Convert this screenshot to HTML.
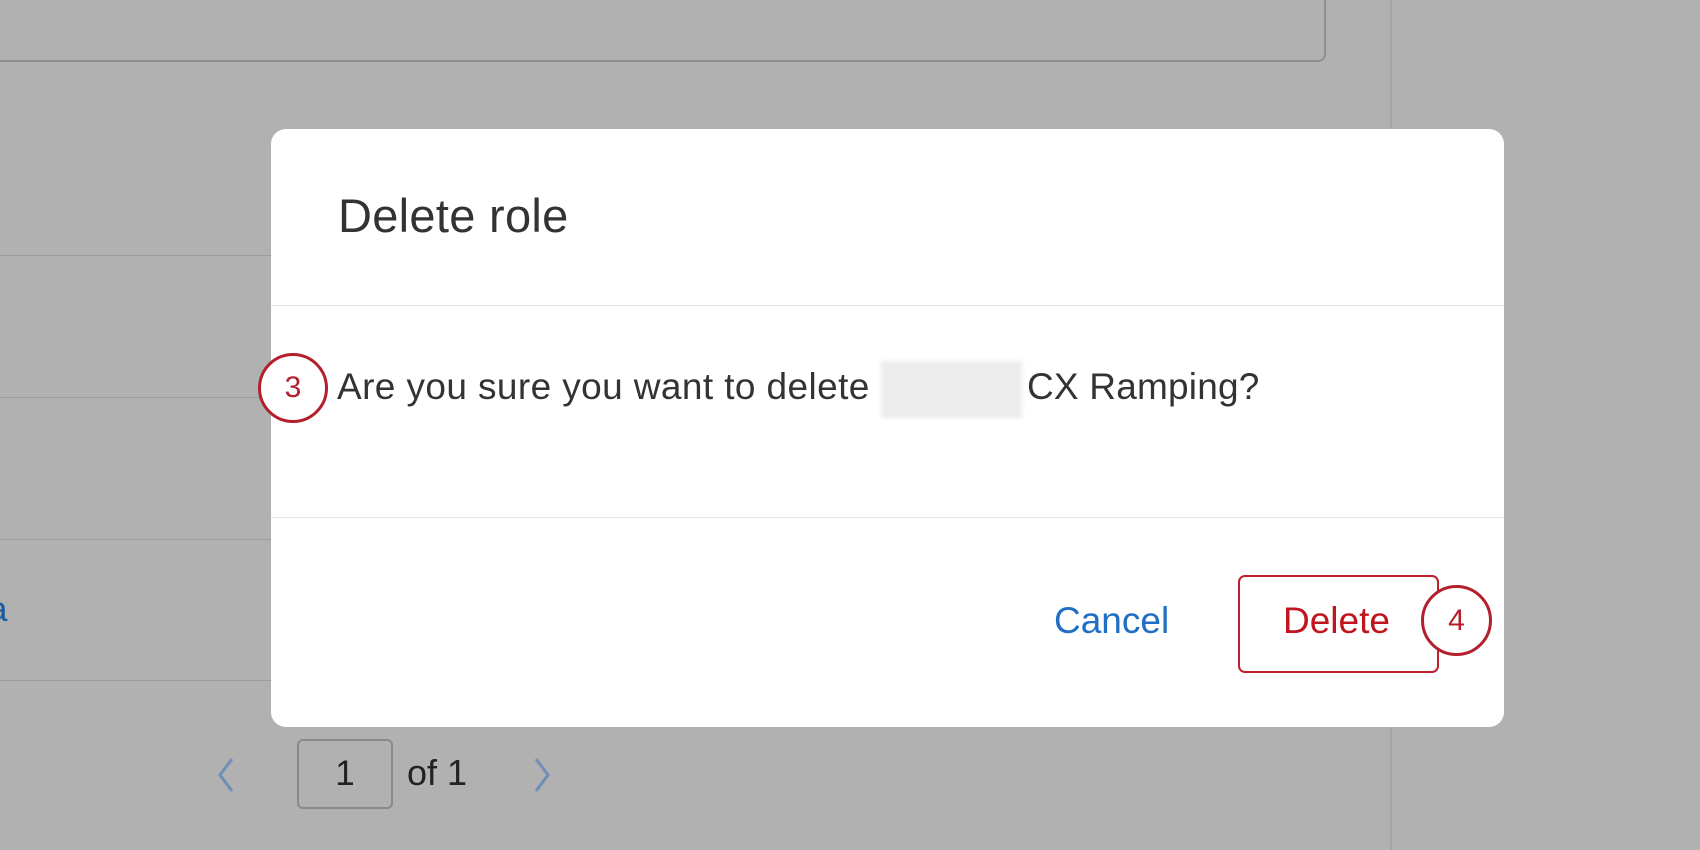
<!DOCTYPE html>
<html><head><style>
html,body{margin:0;padding:0;width:1700px;height:850px;overflow:hidden;background:#b1b1b1;font-family:"Liberation Sans",sans-serif;}
.a{position:absolute;}
</style></head><body>
<div class="a" style="left:-10px;top:-10px;width:1332px;height:68px;border:2px solid #8e8e8e;border-radius:8px;"></div>
<div class="a" style="left:1390px;top:0;width:2px;height:850px;background:#a6a6a6;"></div>
<div class="a" style="left:0;top:255px;width:280px;height:1px;background:#9c9c9c;"></div>
<div class="a" style="left:0;top:397px;width:280px;height:1px;background:#9c9c9c;"></div>
<div class="a" style="left:0;top:539px;width:280px;height:1px;background:#9c9c9c;"></div>
<div class="a" style="left:0;top:680px;width:280px;height:1px;background:#9c9c9c;"></div>
<div class="a" style="left:-12px;top:590px;font-size:35px;color:#1a5aa0;">a</div>
<svg class="a" style="left:210px;top:755px" width="30" height="40"><path d="M22 4 L10 20 L22 36" stroke="#6f8fb8" stroke-width="3" fill="none"/></svg>
<div class="a" style="left:297px;top:739px;width:96px;height:70px;border:2px solid #8a8a8a;border-radius:6px;box-sizing:border-box;text-align:center;line-height:66px;font-size:35px;color:#222;">1</div>
<div class="a" style="left:407px;top:752px;font-size:36px;color:#222;">of 1</div>
<svg class="a" style="left:528px;top:755px" width="30" height="40"><path d="M8 4 L20 20 L8 36" stroke="#6f8fb8" stroke-width="3" fill="none"/></svg>

<div class="a" style="left:271px;top:129px;width:1233px;height:598px;background:#fff;border-radius:15px;"></div>
<div class="a" style="left:338px;top:188px;font-size:47px;letter-spacing:0.3px;color:#333;">Delete role</div>
<div class="a" style="left:271px;top:305px;width:1233px;height:1px;background:#e6e6e6;"></div>
<div class="a" style="left:271px;top:517px;width:1233px;height:1px;background:#e6e6e6;"></div>
<div class="a" style="left:337px;top:366px;font-size:37px;letter-spacing:0.4px;color:#333;white-space:nowrap;">Are you sure you want to delete</div>
<div class="a" style="left:881px;top:361px;width:141px;height:57px;background:#ececec;filter:blur(2px);"></div>
<div class="a" style="left:1027px;top:366px;font-size:37px;letter-spacing:0.2px;color:#333;white-space:nowrap;">CX Ramping?</div>
<div class="a" style="left:258px;top:353px;width:70px;height:70px;border:3px solid #b3202c;border-radius:50%;box-sizing:border-box;background:#fff;text-align:center;line-height:64px;font-size:30px;color:#b3202c;">3</div>
<div class="a" style="left:1054px;top:600px;font-size:37px;color:#1f6fc4;">Cancel</div>
<div class="a" style="left:1238px;top:575px;width:201px;height:98px;border:2px solid #c0202c;border-radius:7px;box-sizing:border-box;"></div>
<div class="a" style="left:1283px;top:600px;font-size:37px;color:#c0141e;">Delete</div>
<div class="a" style="left:1421px;top:585px;width:71px;height:71px;border:3px solid #b3202c;border-radius:50%;box-sizing:border-box;background:#fff;text-align:center;line-height:65px;font-size:30px;color:#b3202c;">4</div>
</body></html>
